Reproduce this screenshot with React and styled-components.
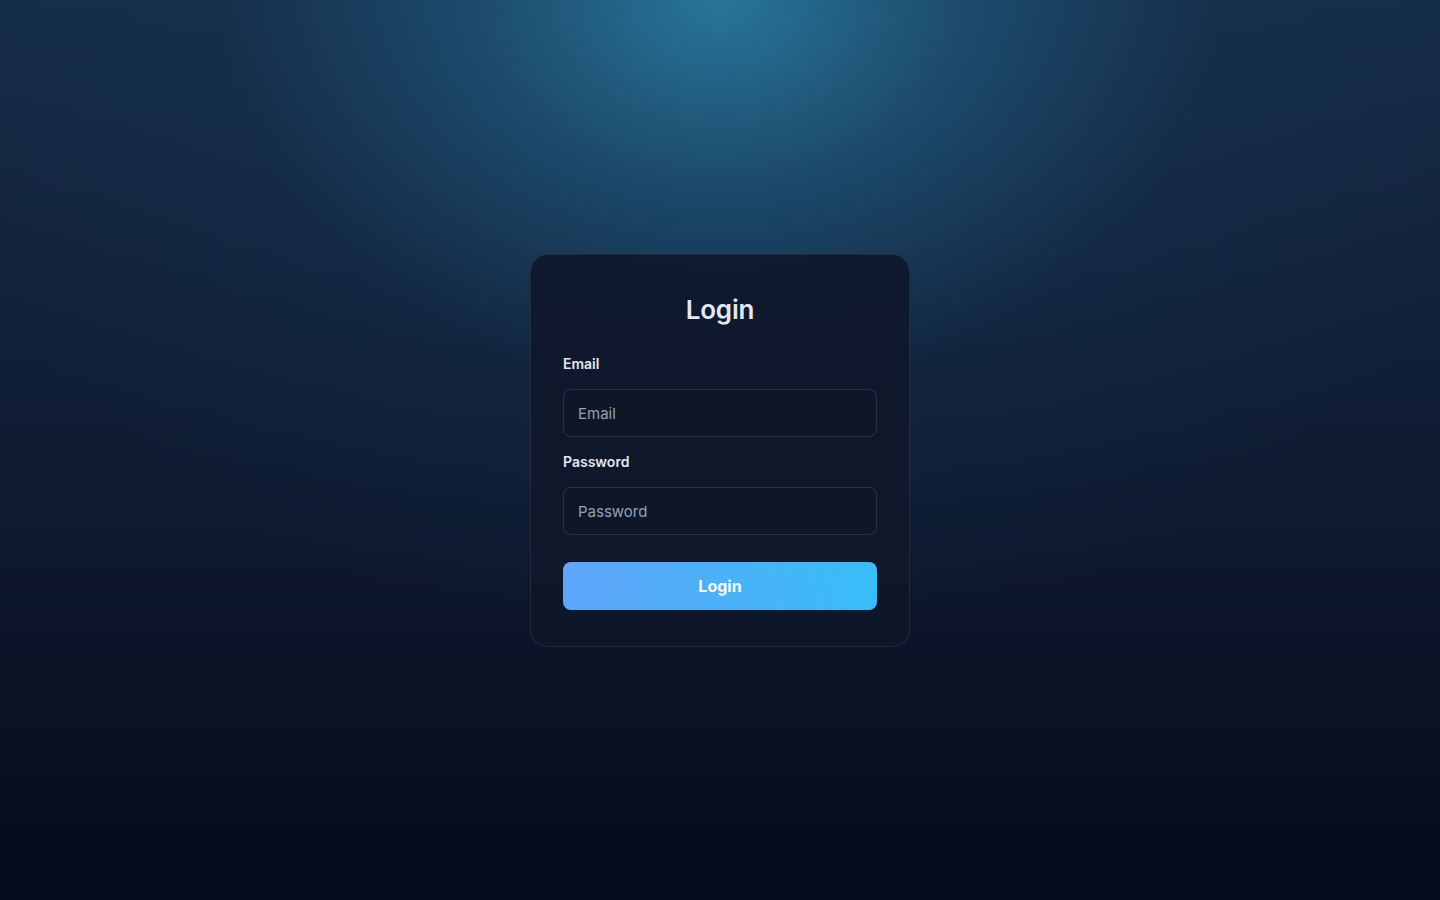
import React from 'react';
import styled, { createGlobalStyle } from 'styled-components';

const GlobalStyle = createGlobalStyle`
   * {
      box-sizing: border-box;
   }
   html, body {
      margin: 0;
      padding: 0;
   }
   body {
      font-family: Inter, 'Noto Sans', sans-serif;
      background: #060b1c;
   }
`;

const Page = styled.div`
   min-height: 100vh;
   display: flex;
   align-items: flex-start;
   justify-content: center;
   padding-top: 254px;
   background:
      radial-gradient(ellipse 58% 72% at 50% 0%, rgba(40, 122, 158, 0.95) 0%, rgba(31, 86, 122, 0.7) 30%, rgba(20, 50, 80, 0.35) 60%, rgba(10, 20, 40, 0) 100%),
      linear-gradient(180deg, #172d48 0%, #0f1a30 55%, #060b1c 100%);
`;

const Card = styled.form`
   width: 380px;
   padding: 39px 32px 36px;
   background: rgba(15, 23, 42, 0.92);
   border: 1px solid rgba(148, 163, 184, 0.14);
   border-radius: 18px;
   display: flex;
   flex-direction: column;
`;

const Title = styled.h1`
   margin: 0 0 28px;
   text-align: center;
   font-size: 26px;
   line-height: 32px;
   font-weight: 600;
   color: #e2e8f0;
   letter-spacing: -0.2px;
`;

const Field = styled.div`
   display: flex;
   flex-direction: column;
   gap: 15px;
   margin-bottom: ${(props) => props.$last ? '27px' : '15px'};
`;

const Label = styled.label`
   font-size: 14px;
   line-height: 20px;
   font-weight: 600;
   color: #e2e8f0;
`;

const Input = styled.input`
   height: 48px;
   width: 100%;
   padding: 0 14px;
   background: #0e1628;
   border: 1px solid rgba(148, 163, 184, 0.2);
   border-radius: 8px;
   font-family: inherit;
   font-size: 15px;
   color: #e2e8f0;
   outline: none;

   &::placeholder {
      color: #94a3b8;
   }
`;

const Button = styled.button`
   height: 48px;
   width: 100%;
   border: 0;
   border-radius: 8px;
   background: linear-gradient(100deg, #60a5fa 0%, #38bdf8 100%);
   color: #f8fafc;
   font-family: inherit;
   font-size: 16px;
   font-weight: 700;
   cursor: pointer;
`;

export default function App() {
   return (
      <>
         <GlobalStyle />
         <Page>
            <Card onSubmit={(e) => e.preventDefault()}>
               <Title>Login</Title>
               <Field>
                  <Label htmlFor="email">Email</Label>
                  <Input id="email" type="email" placeholder="Email" />
               </Field>
               <Field $last>
                  <Label htmlFor="password">Password</Label>
                  <Input id="password" type="password" placeholder="Password" />
               </Field>
               <Button type="submit">Login</Button>
            </Card>
         </Page>
      </>
   );
}
